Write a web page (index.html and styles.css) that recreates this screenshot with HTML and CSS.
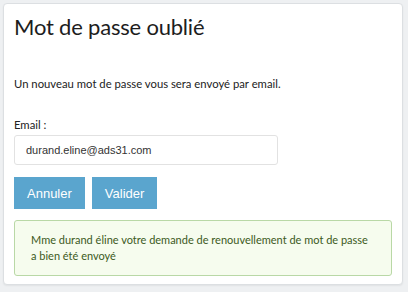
FILE: index.html
```html
<!DOCTYPE html>
<html lang="fr">
<head>
    <meta charset="UTF-8">
    <meta name="viewport" content="width=device-width, initial-scale=1.0">
    <title>Mot de passe oublié</title>
    <link rel="stylesheet" href="styles.css">
</head>
<body>

    <div class="card">
        <h2>Mot de passe oublié</h2>

        <p class="intro">Un nouveau mot de passe vous sera envoyé par email.</p>

        <form id="forgotForm">
            <label for="email">Email :</label>
            <input type="email" id="email" name="email" value="durand.eline@ads31.com">

            <div class="actions">
                <button type="button">Annuler</button>
                <button type="submit">Valider</button>
            </div>
        </form>

        <div class="alert-success">
            Mme durand éline votre demande de renouvellement de mot de passe a bien été envoyé
        </div>
    </div>

</body>
</html>
```

FILE: styles.css
```css
body {
    font-family: "Lato", "Open Sans", sans-serif;
    margin: 0;
    padding: 3px 5px 5px 3px;
    background-color: #eef0f2;
    color: #222;
}
.card {
    background-color: #fff;
    border: 1px solid #dcdfe2;
    border-radius: 4px;
    box-shadow: 0 1px 2px rgba(0, 0, 0, 0.06);
    padding: 7px 10px 10px 10px;
    height: 282px;
    box-sizing: border-box;
}
h2 {
    font-family: "Lato", sans-serif;
    font-weight: 400;
    font-size: 22px;
    letter-spacing: -0.2px;
    line-height: 32px;
    margin: 0 0 34px 0;
    color: #1d1d1d;
}
.intro {
    font-size: 11.3px;
    margin: 0 0 28px 0;
}
label {
    display: block;
    font-size: 11.3px;
    margin-bottom: 4px;
}
input[type="email"] {
    width: 264px;
    height: 30px;
    padding: 0 11px;
    border: 1px solid #e2e2e2;
    border-radius: 3px;
    box-sizing: border-box;
    font-family: "Liberation Sans", Arial, sans-serif;
    font-size: 11px;
    color: #333;
}
.actions {
    display: flex;
    gap: 7px;
    margin-top: 12px;
}
button {
    background-color: #5aa5ce;
    color: white;
    font-family: "Liberation Sans", Arial, sans-serif;
    font-size: 13px;
    height: 32px;
    padding: 0 13px;
    border: none;
    border-radius: 0;
    cursor: pointer;
}
.alert-success {
    margin-top: 11px;
    width: 378px;
    box-sizing: border-box;
    padding: 11px 16px;
    background-color: #f6fcee;
    border: 1px solid #b9d8a6;
    border-radius: 3px;
    color: #3c5a22;
    font-size: 11px;
    line-height: 16px;
}
```
